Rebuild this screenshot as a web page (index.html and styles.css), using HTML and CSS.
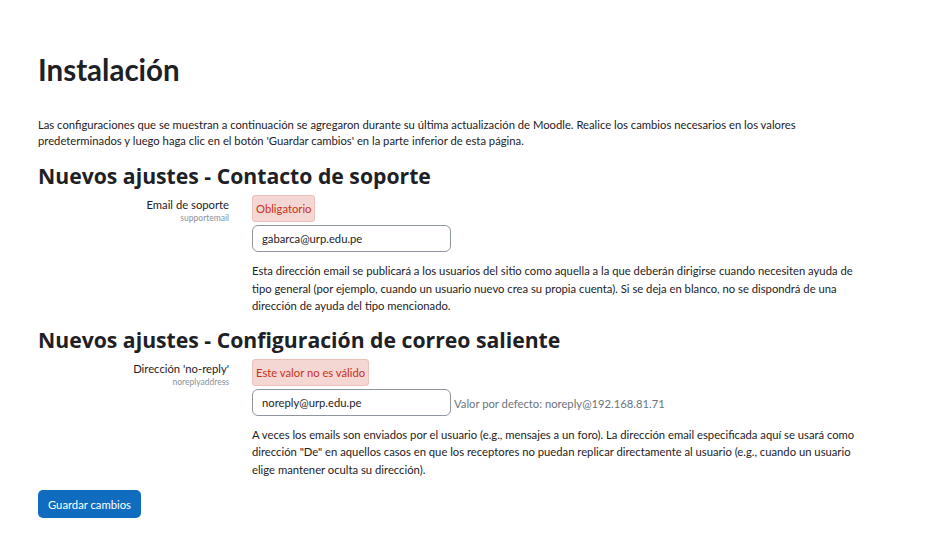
FILE: index.html
```html
<!DOCTYPE html>
<html lang="es">
<head>
<meta charset="utf-8">
<title>Instalación</title>
<link rel="stylesheet" href="styles.css">
</head>
<body>
<main class="page">
  <h2 class="title">Instalación</h2>
  <p class="intro">Las configuraciones que se muestran a continuación se agregaron durante su última actualización de Moodle. Realice los cambios necesarios en los valores predeterminados y luego haga clic en el botón 'Guardar cambios' en la parte inferior de esta página.</p>

  <h3 class="section">Nuevos ajustes - Contacto de soporte</h3>
  <div class="setting">
    <div class="label">
      <div class="label-name">Email de soporte</div>
      <div class="label-key">supportemail</div>
    </div>
    <div class="field">
      <div class="badge">Obligatorio</div>
      <div class="input-row">
        <input class="input" type="text" value="gabarca@urp.edu.pe">
      </div>
      <div class="desc">Esta dirección email se publicará a los usuarios del sitio como aquella a la que deberán dirigirse cuando necesiten ayuda de tipo general (por ejemplo, cuando un usuario nuevo crea su propia cuenta). Si se deja en blanco, no se dispondrá de una dirección de ayuda del tipo mencionado.</div>
    </div>
  </div>

  <h3 class="section">Nuevos ajustes - Configuración de correo saliente</h3>
  <div class="setting">
    <div class="label">
      <div class="label-name">Dirección 'no-reply'</div>
      <div class="label-key">noreplyaddress</div>
    </div>
    <div class="field">
      <div class="badge">Este valor no es válido</div>
      <div class="input-row">
        <input class="input" type="text" value="noreply@urp.edu.pe">
        <span class="default">Valor por defecto: noreply@192.168.81.71</span>
      </div>
      <div class="desc">A veces los emails son enviados por el usuario (e.g., mensajes a un foro). La dirección email especificada aquí se usará como dirección "De" en aquellos casos en que los receptores no puedan replicar directamente al usuario (e.g., cuando un usuario elige mantener oculta su dirección).</div>
    </div>
  </div>

  <button class="btn" type="button">Guardar cambios</button>
</main>
</body>
</html>
```

FILE: styles.css
```css
* { box-sizing: border-box; }
html, body { margin: 0; padding: 0; background: #fff; }
body {
  font-family: Lato, "Open Sans", sans-serif;
  font-size: 11.25px;
  color: #1d2125;
}
.page {
  padding: 52px 0 0 38px;
  width: 900px;
}
.title {
  font-size: 29.5px;
  font-weight: 700;
  margin: 0;
  line-height: 36px;
}
.intro {
  margin: 29px 0 0;
  line-height: 16px;
  width: 790px;
}
.section {
  font-family: "Open Sans", Lato, sans-serif;
  font-size: 21.2px;
  font-weight: 700;
  margin: 13px 0 0;
  line-height: 28px;
}
.setting + .section {
  margin-top: 11px;
}
.setting {
  display: grid;
  grid-template-columns: 191px 1fr;
  column-gap: 23px;
  margin-top: 5px;
}
.label {
  text-align: right;
  padding-top: 2px;
}
.label-name {
  line-height: 16px;
}
.label-key {
  font-size: 8.5px;
  color: #8a9299;
  line-height: 11px;
}
.field {
  display: flex;
  flex-direction: column;
  align-items: flex-start;
}
.badge {
  background: #f4d6d2;
  color: #ca3120;
  border: 1px solid #eec0ba;
  border-radius: 3px;
  padding: 4px 3px;
  line-height: 17px;
}
.input-row {
  display: flex;
  align-items: center;
  margin-top: 3px;
}
.input {
  width: 199px;
  height: 27px;
  border: 1px solid #8f959e;
  border-radius: 6px;
  padding: 0 9px;
  font-family: inherit;
  font-size: 11.25px;
  color: #1d2125;
  background: #fff;
}
.default {
  color: #6a737b;
  margin-left: 3px;
  padding-top: 2px;
}
.desc {
  margin-top: 10px;
  line-height: 17.5px;
  width: 620px;
}
.btn {
  margin-top: 12px;
  background: #0f6cbf;
  color: #fff;
  border: 0;
  border-radius: 5px;
  font-family: inherit;
  font-size: 11.25px;
  padding: 0 10px;
  height: 28px;
  white-space: nowrap;
}
```
